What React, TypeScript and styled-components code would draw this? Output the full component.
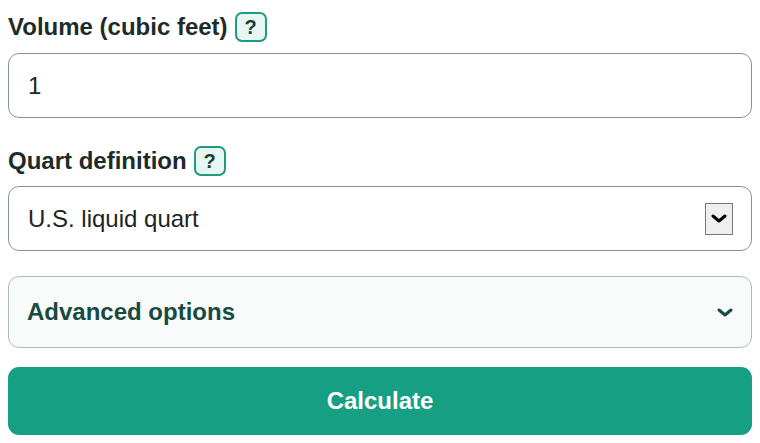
import styled, { createGlobalStyle } from 'styled-components';

const GlobalStyle = createGlobalStyle`
  body {
    margin: 8px;
    background: #ffffff;
    font-family: "Liberation Sans", Arial, sans-serif;
  }
`;

const Form = styled.div`
  display: flex;
  flex-direction: column;
  padding-top: 4px;
`;

const Field = styled.div<{ $gap: number }>`
  display: flex;
  flex-direction: column;
  gap: ${(p) => p.$gap}px;
  margin-bottom: 28px;
`;

const LabelRow = styled.div`
  display: flex;
  align-items: center;
  gap: 7px;
  height: 30px;
`;

const Label = styled.label`
  font-size: 24px;
  font-weight: bold;
  color: #1d2b29;
`;

const HelpButton = styled.button`
  width: 32px;
  height: 30px;
  padding: 0;
  border: 2px solid #1f9b7e;
  border-radius: 7px;
  background: #e7f6f1;
  color: #173f37;
  font-family: "Liberation Sans", Arial, sans-serif;
  font-size: 20px;
  font-weight: bold;
  display: flex;
  align-items: center;
  justify-content: center;
`;

const TextBox = styled.div`
  box-sizing: border-box;
  height: 65px;
  border: 1.5px solid #87948f;
  border-radius: 11px;
  padding: 0 19px;
  display: flex;
  align-items: center;
  justify-content: space-between;
  font-size: 24px;
  color: #1f2422;
  background: #ffffff;
`;

const SelectArrow = styled.div`
  width: 28px;
  height: 32px;
  box-sizing: border-box;
  border: 1px solid #767676;
  background: #efefef;
  display: flex;
  align-items: center;
  justify-content: center;
  margin-right: -1px;
`;

const Advanced = styled.div`
  box-sizing: border-box;
  height: 72px;
  border: 1.5px solid #adbfb9;
  border-radius: 11px;
  background: #f8fbfa;
  padding: 0 18px;
  display: flex;
  align-items: center;
  justify-content: space-between;
  margin-top: -3px;
  margin-bottom: 19px;
`;

const AdvancedTitle = styled.span`
  font-size: 24px;
  font-weight: bold;
  color: #174a40;
`;

const CalculateButton = styled.button`
  height: 68px;
  border: none;
  border-radius: 11px;
  background: #179f83;
  color: #ffffff;
  font-family: "Liberation Sans", Arial, sans-serif;
  font-size: 24px;
  font-weight: bold;
`;

const Chevron = ({ color, w, h, sw }: { color: string; w: number; h: number; sw: number }) => (
  <svg width={w} height={h} viewBox={`0 0 ${w} ${h}`} fill="none">
    <polyline
      points={`${sw / 2 + 0.5},${sw / 2 + 0.5} ${w / 2},${h - sw / 2 - 0.5} ${w - sw / 2 - 0.5},${sw / 2 + 0.5}`}
      stroke={color}
      strokeWidth={sw}
      strokeLinecap="round"
      strokeLinejoin="round"
    />
  </svg>
);

export default function App() {
  return (
    <>
      <GlobalStyle />
      <Form>
        <Field $gap={11}>
          <LabelRow>
            <Label>Volume (cubic feet)</Label>
            <HelpButton>?</HelpButton>
          </LabelRow>
          <TextBox>1</TextBox>
        </Field>
        <Field $gap={10}>
          <LabelRow>
            <Label>Quart definition</Label>
            <HelpButton>?</HelpButton>
          </LabelRow>
          <TextBox>
            <span>U.S. liquid quart</span>
            <SelectArrow>
              <Chevron color="#000000" w={16} h={9} sw={3} />
            </SelectArrow>
          </TextBox>
        </Field>
        <Advanced>
          <AdvancedTitle>Advanced options</AdvancedTitle>
          <Chevron color="#174a40" w={16} h={9} sw={3} />
        </Advanced>
        <CalculateButton>Calculate</CalculateButton>
      </Form>
    </>
  );
}
